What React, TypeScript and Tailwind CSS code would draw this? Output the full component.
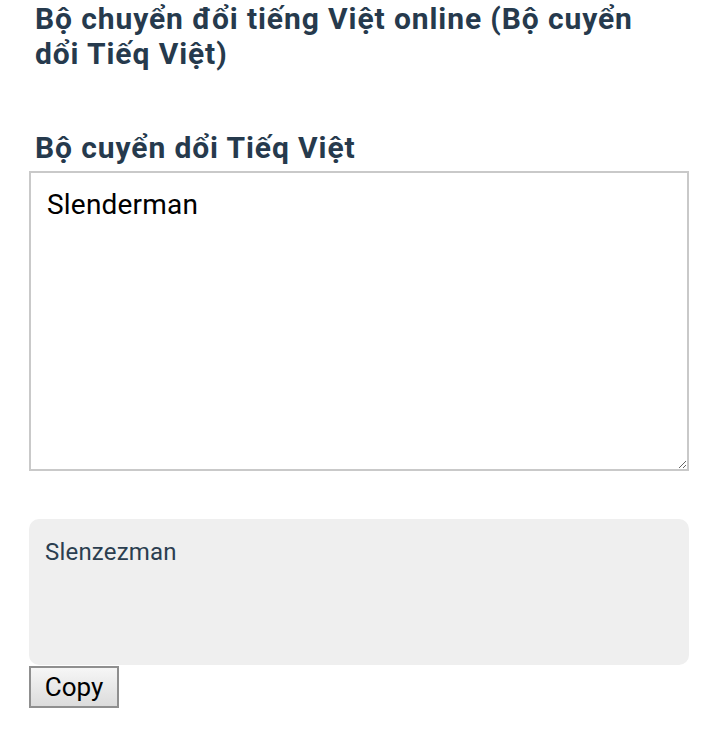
import React from 'react';

const App = () => {
  return (
    <div className="min-h-screen bg-white pl-[29px] pr-[25px] font-['Roboto',sans-serif]">
      <h1 className="max-w-[640px] pl-[6px] pt-[1px] text-[30px] font-bold leading-[35px] tracking-[0.9px] text-[#263a4d]">
        Bộ chuyển đổi tiếng Việt online (Bộ cuyển dổi Tiếq Việt)
      </h1>

      <h2 className="mt-[59px] pl-[6px] text-[30px] font-bold leading-[36px] tracking-[0.9px] text-[#263a4d]">
        Bộ cuyển dổi Tiếq Việt
      </h2>

      <textarea
        defaultValue="Slenderman"
        className="mt-[5px] block h-[300px] w-full resize-y border-2 border-[#c9c9c9] bg-white px-[16px] pb-[11px] pt-[14px] text-[28px] leading-[36px] tracking-[0.2px] text-black outline-none"
      />

      <div className="mt-[48px] h-[146px] rounded-[10px] bg-[#efefef] px-[16px] py-[18px] text-[24px] leading-[30px] tracking-[0.2px] text-[#2b3e50]">
        Slenzezman
      </div>

      <button className="mt-px block h-[42px] w-[90px] border-2 border-[#8f8f8f] bg-gradient-to-b from-[#f6f6f6] to-[#dcdcdc] text-[26px] leading-[36px] text-black">
        Copy
      </button>
    </div>
  );
};

export default App;
